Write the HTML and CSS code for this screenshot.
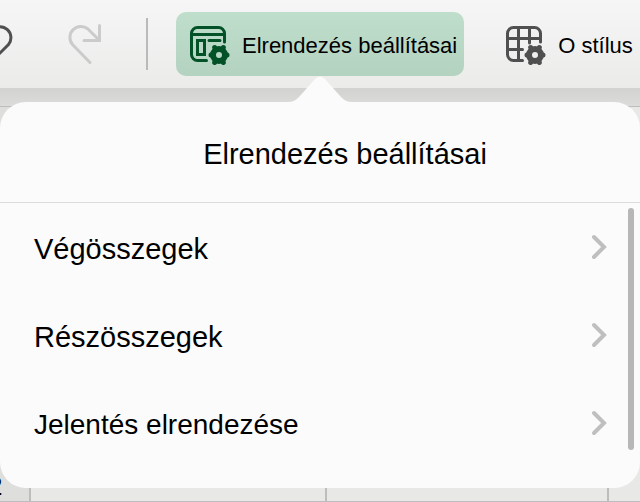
FILE: index.html
```html
<!DOCTYPE html>
<html lang="hu">
<head>
<meta charset="utf-8">
<title>Elrendezés beállításai</title>
<link rel="stylesheet" href="styles.css">
</head>
<body>
<header class="toolbar">
  <button class="tool undo" type="button" aria-label="Visszavonás">
    <svg width="36" height="44" viewBox="0 0 36 44"><path d="M2.500 3.500V19H18M3 18.500 14.500 7.500A11 11 0 0 1 30.500 22.500L12.500 40.500"/></svg>
  </button>
  <button class="tool redo" type="button" aria-label="Ismét">
    <svg width="36" height="44" viewBox="0 0 36 44"><path d="M33.500 3.500V18.500H18M32.500 17.500 22 7A11 11 0 0 0 6.500 22.500L24 40.500"/></svg>
  </button>
  <span class="divider"></span>
  <button class="tool labelled active" type="button" aria-expanded="true">
    <svg width="40" height="40" viewBox="0 0 40 40">
      <path d="M16.500 34.500H7.500a6 6 0 0 1-6-6V7.500a6 6 0 0 1 6-6h21a6 6 0 0 1 6 6V16M1.500 8.500h33M7.500 14.500h7v14h-7zM19 14.500h11"/>
      <use href="#gear"/>
    </svg>
    <span>Elrendezés beállításai</span>
  </button>
  <button class="tool labelled" type="button">
    <svg width="40" height="40" viewBox="0 0 40 40">
      <path d="M16.500 34.500H7.500a6 6 0 0 1-6-6V7.500a6 6 0 0 1 6-6h21a6 6 0 0 1 6 6V16M1.500 12.500h33M1.500 23.500h15M12.500 1.500v33M23.500 1.500V17"/>
      <g id="gear">
        <circle class="gear-ring" cx="29" cy="29" r="6"/>
        <path class="gear-teeth" d="M21 29h2M35 29h2M24.700 21.500l1 1.700M32.300 34.800l1 1.700M33.300 21.500l-1 1.700M25.700 34.800l-1 1.700"/>
      </g>
    </svg>
    <span>O stílus</span>
  </button>
</header>
<main class="sheet">
  <div class="row columns"></div>
  <div class="row cells">
    <span class="cell number">2</span><span class="cell"></span><span class="cell"></span><span class="cell"></span>
  </div>
</main>
<section class="popover" aria-labelledby="popover-title">
  <svg class="arrow" width="64" height="28" viewBox="0 0 64 28"><path d="M0 28V26C5 26 8 24 11 21L27 3Q32-2 37 3L53 21C56 24 59 26 64 26V28z"/></svg>
  <h1 class="title" id="popover-title">Elrendezés beállításai</h1>
  <nav class="menu">
    <a class="item" href="#totals"><span>Végösszegek</span><svg width="16" height="26" viewBox="0 0 16 26"><path d="M3 3 13 13 3 23"/></svg></a>
    <a class="item" href="#subtotals"><span>Részösszegek</span><svg width="16" height="26" viewBox="0 0 16 26"><path d="M3 3 13 13 3 23"/></svg></a>
    <a class="item compact" href="#report"><span>Jelentés elrendezése</span><svg width="16" height="26" viewBox="0 0 16 26"><path d="M3 3 13 13 3 23"/></svg></a>
    <span class="scrollbar"></span>
  </nav>
</section>
</body>
</html>
```
FILE: styles.css
```css
* {
  box-sizing: border-box;
}

body {
  margin: 0;
  min-height: 100vh;
  display: flex;
  flex-direction: column;
  position: relative;
  overflow: hidden;
  font-family: "Liberation Sans", Arial, sans-serif;
  color: #000;
  background: #e8e8e7;
}

.toolbar {
  height: 88px;
  flex: none;
  display: flex;
  align-items: center;
  overflow: hidden;
  background: linear-gradient(#f6f6f6, #ebebea);
}

.tool {
  flex: none;
  display: flex;
  align-items: center;
  padding: 0;
  border: 0;
  background: none;
  font: inherit;
  color: #505050;
}

.tool svg {
  fill: none;
  stroke: currentColor;
  stroke-width: 3;
  stroke-linecap: round;
  stroke-linejoin: miter;
}

.tool .gear-ring {
  stroke-width: 6;
}

.tool .gear-teeth {
  stroke-width: 5;
}

.undo {
  margin-left: -22px;
}

.redo {
  margin-left: 52px;
  color: #cbcbcb;
}

.divider {
  flex: none;
  width: 2px;
  height: 52px;
  margin: 0 28px 0 44px;
  background: #bababa;
}

.labelled {
  height: 64px;
  gap: 12px;
  padding: 4px 7px 0 14px;
  border-radius: 10px;
  font-size: 22px;
  line-height: 28px;
  white-space: nowrap;
}

.labelled + .labelled {
  margin-left: 28px;
}

.labelled span {
  color: #000;
}

.active {
  color: #035227;
  background: linear-gradient(#bfdecb, #b4d2c0);
}

.sheet {
  flex: 1;
  display: flex;
  flex-direction: column;
}

.row {
  border-bottom: 1px solid #bdbdbd;
}

.columns {
  height: 19px;
  background: linear-gradient(#d2d2d1, #dcdcdb);
}

.cells {
  flex: 1;
  display: grid;
  grid-template-columns: 31px 296px 282px 1fr;
}

.cell {
  border-right: 2px solid #bdbdbd;
}

.cell:last-child {
  border-right: 0;
}

.number {
  display: flex;
  align-items: flex-end;
  text-indent: -12px;
  font-size: 26px;
  line-height: 30px;
  background: #dededd;
}

.popover {
  position: absolute;
  top: 102px;
  left: 0;
  right: 0;
  padding-bottom: 21px;
  border-radius: 26px;
  background: #fbfbfb;
}

.arrow {
  position: absolute;
  bottom: 100%;
  left: 50%;
  margin: 0 0 -2px -32px;
  fill: #fbfbfb;
}

.title {
  margin: 0;
  padding: 36px 0 32px 50px;
  border-bottom: 1px solid #dcdcdc;
  font-size: 29px;
  font-weight: 400;
  line-height: 32px;
  text-align: center;
}

.menu {
  position: relative;
}

.item {
  height: 88px;
  display: flex;
  align-items: center;
  justify-content: space-between;
  padding: 0 33px 0 34px;
  font-size: 29px;
  line-height: 32px;
  color: inherit;
  text-decoration: none;
}

.item span {
  padding-top: 4px;
}

.compact {
  font-size: 28px;
}

.item svg {
  fill: none;
  stroke: #bfbfbf;
  stroke-width: 4;
  stroke-linecap: round;
}

.scrollbar {
  position: absolute;
  top: 5px;
  bottom: 17px;
  right: 6px;
  width: 6px;
  border-radius: 3px;
  background: #b7b7b7;
}
```
